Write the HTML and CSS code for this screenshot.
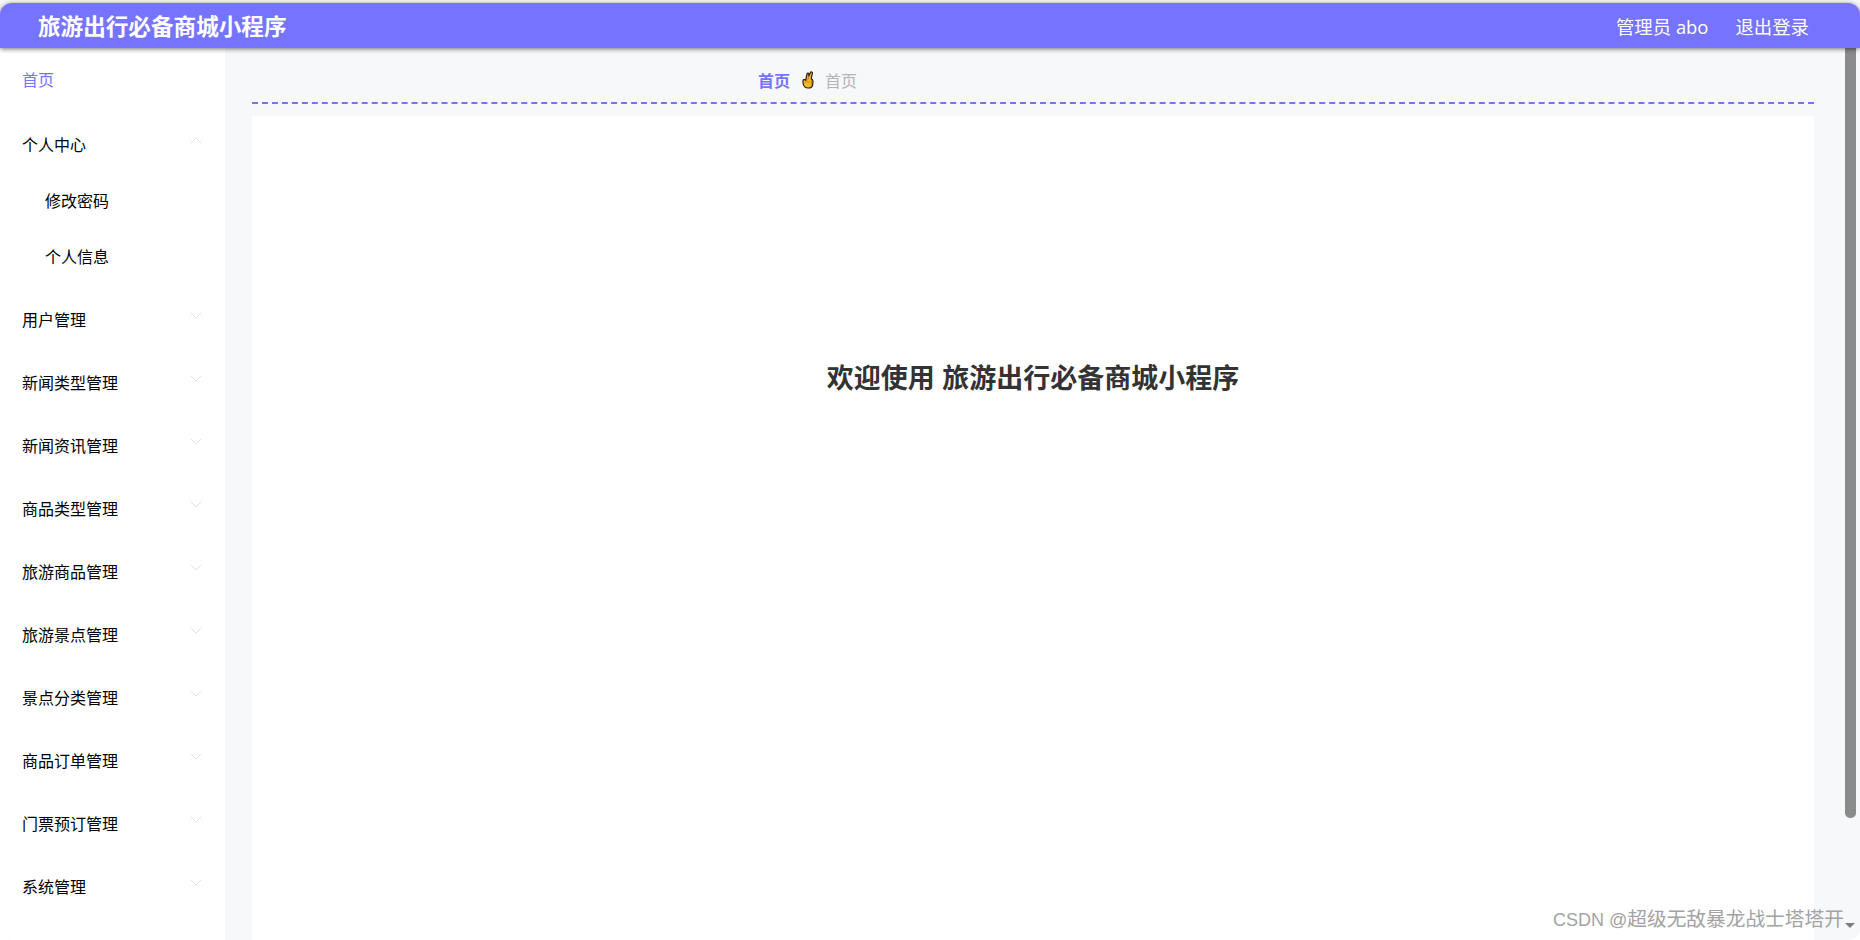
FILE: index.html
```html
<!DOCTYPE html>
<html lang="zh-CN">
<head>
<meta charset="utf-8">
<title>旅游出行必备商城小程序</title>
<link rel="stylesheet" href="styles.css">
</head>
<body>
<div class="window">
  <header class="topbar">
    <div class="brand">旅游出行必备商城小程序</div>
    <div class="account">
      <span>管理员 abo</span>
      <span>退出登录</span>
    </div>
  </header>
  <div class="body-row">
    <nav class="sidebar">
      <div class="home-link">首页</div>
      <div class="menu-row first-group"><span>个人中心</span><svg class="chev chev-up" viewBox="0 0 12 7"><path d="M1 6 6 1l5 5"/></svg></div>
      <div class="sub-row sub-first">修改密码</div>
      <div class="sub-row sub-last">个人信息</div>
      <div class="menu-row"><span>用户管理</span><svg class="chev" viewBox="0 0 12 7"><path d="M1 1l5 5 5-5"/></svg></div>
      <div class="menu-row"><span>新闻类型管理</span><svg class="chev" viewBox="0 0 12 7"><path d="M1 1l5 5 5-5"/></svg></div>
      <div class="menu-row"><span>新闻资讯管理</span><svg class="chev" viewBox="0 0 12 7"><path d="M1 1l5 5 5-5"/></svg></div>
      <div class="menu-row"><span>商品类型管理</span><svg class="chev" viewBox="0 0 12 7"><path d="M1 1l5 5 5-5"/></svg></div>
      <div class="menu-row"><span>旅游商品管理</span><svg class="chev" viewBox="0 0 12 7"><path d="M1 1l5 5 5-5"/></svg></div>
      <div class="menu-row"><span>旅游景点管理</span><svg class="chev" viewBox="0 0 12 7"><path d="M1 1l5 5 5-5"/></svg></div>
      <div class="menu-row"><span>景点分类管理</span><svg class="chev" viewBox="0 0 12 7"><path d="M1 1l5 5 5-5"/></svg></div>
      <div class="menu-row"><span>商品订单管理</span><svg class="chev" viewBox="0 0 12 7"><path d="M1 1l5 5 5-5"/></svg></div>
      <div class="menu-row"><span>门票预订管理</span><svg class="chev" viewBox="0 0 12 7"><path d="M1 1l5 5 5-5"/></svg></div>
      <div class="menu-row"><span>系统管理</span><svg class="chev" viewBox="0 0 12 7"><path d="M1 1l5 5 5-5"/></svg></div>
    </nav>
    <main class="main">
      <div class="crumbs">
        <span class="crumb-active">首页</span>
        <svg class="crumb-icon" viewBox="0 0 12 18">
          <path class="hand" d="M1 11.5V9.6C1 8.7 2.2 8.2 3 8.8L3.6 9.3 5 3C5.3 1.7 7 1.9 6.9 3.3L6.7 5.2 8.4 1.6C9 .4 10.7 1 10.4 2.4L9.2 7.6C10.6 8.3 11.1 9.4 11 10.8L10.7 13.6C10.4 15.8 8.8 17 6.4 17 3.2 17 1.2 15 1 11.5Z"/>
          <path class="hand-line" d="M3.2 11.6C4.6 10.4 6.4 10.4 7.8 11.2M6.7 5.2 5.6 9.4M9.6 9 9 14.5"/>
        </svg>
        <span class="crumb-muted">首页</span>
      </div>
      <section class="panel">
        <h1 class="welcome">欢迎使用 旅游出行必备商城小程序</h1>
      </section>
    </main>
  </div>
  <div class="scroll-thumb"></div>
</div>
<div class="watermark"><span class="watermark-latin">CSDN @</span>超级无敌暴龙战士塔塔开</div>
<div class="scroll-arrow"></div>
</body>
</html>
```

FILE: styles.css
```css
* { box-sizing: border-box; }

html, body {
  margin: 0;
  height: 940px;
  overflow: hidden;
  background: #fff;
}

body {
  font-family: "Liberation Sans", "Noto Sans CJK SC", sans-serif;
  position: relative;
}

.window {
  position: relative;
  width: 1860px;
  height: 940px;
  padding-top: 3px;
  background: #f7f8fa;
  border-radius: 0 0 12px 12px;
  overflow: hidden;
  display: flex;
  flex-direction: column;
}

.topbar {
  flex: none;
  position: relative;
  z-index: 2;
  height: 45px;
  padding: 0 51px 0 38px;
  display: flex;
  align-items: center;
  justify-content: space-between;
  background: #7674ff;
  color: #fff;
  border-radius: 12px 12px 0 0;
  box-shadow: 0 1px 5px rgba(0, 0, 0, 0.55);
}

.brand {
  font-size: 22.6px;
  font-weight: 700;
}

.account {
  display: flex;
  gap: 27px;
  font-family: "Open Sans", "Noto Sans CJK SC", sans-serif;
  font-size: 18.4px;
}

.body-row {
  flex: 1;
  display: flex;
  min-height: 0;
}

.sidebar {
  flex: none;
  width: 225px;
  background: #fff;
  font-size: 16px;
  color: #000;
}

.home-link {
  height: 63px;
  padding: 16px 22px 0;
  line-height: 34px;
  color: #7674ff;
}

.menu-row {
  position: relative;
  height: 63px;
  padding: 0 22px;
  line-height: 63px;
}

.first-group {
  margin-top: 3px;
}

.sub-row {
  height: 56px;
  padding-left: 45px;
  line-height: 56px;
}

.sub-first {
  margin-top: -3px;
}

.sub-last {
  margin-bottom: 3px;
}

.chev {
  position: absolute;
  top: 23px;
  right: 23px;
  width: 12px;
  height: 7px;
  fill: none;
  stroke: #dfe2ec;
  stroke-width: 1;
}

.chev-up {
  top: 23px;
}

.main {
  flex: 1;
  min-width: 0;
  padding: 0 46px 0 27px;
  display: flex;
  flex-direction: column;
}

.crumbs {
  flex: none;
  height: 56px;
  padding: 9px 0 0 506px;
  display: flex;
  align-items: center;
  font-size: 16px;
  border-bottom: 2px dashed #7674ff;
}

.crumb-active {
  font-weight: 700;
  color: #7674ff;
}

.crumb-icon {
  width: 12px;
  height: 18px;
  margin: 0 11px 0 12px;
}

.hand {
  fill: #fbb829;
  stroke: #2b2118;
  stroke-width: 1.2;
  stroke-linejoin: round;
}

.hand-line {
  fill: none;
  stroke: #b5760f;
  stroke-width: 0.9;
}

.crumb-muted {
  color: #b4b4b4;
}

.panel {
  flex: 1;
  margin-top: 12px;
  background: #fff;
}

.welcome {
  margin: 0;
  padding-top: 247px;
  text-align: center;
  font-size: 27px;
  line-height: 32px;
  font-weight: 700;
  color: #333;
}

.scroll-thumb {
  position: absolute;
  z-index: 1;
  top: 48px;
  left: 1845px;
  width: 11px;
  height: 770px;
  background: #8b8b8b;
  border-radius: 0 0 5px 5px;
}

.watermark {
  position: absolute;
  top: 907px;
  left: 1553px;
  font-size: 19.7px;
  line-height: 24px;
  color: #a3a3a3;
  white-space: nowrap;
}

.watermark-latin {
  font-size: 18px;
}

.scroll-arrow {
  position: absolute;
  top: 923px;
  left: 1845px;
  width: 0;
  height: 0;
  border-style: solid;
  border-width: 5px 5.5px 0;
  border-color: #7d7d7d transparent transparent;
}
```
